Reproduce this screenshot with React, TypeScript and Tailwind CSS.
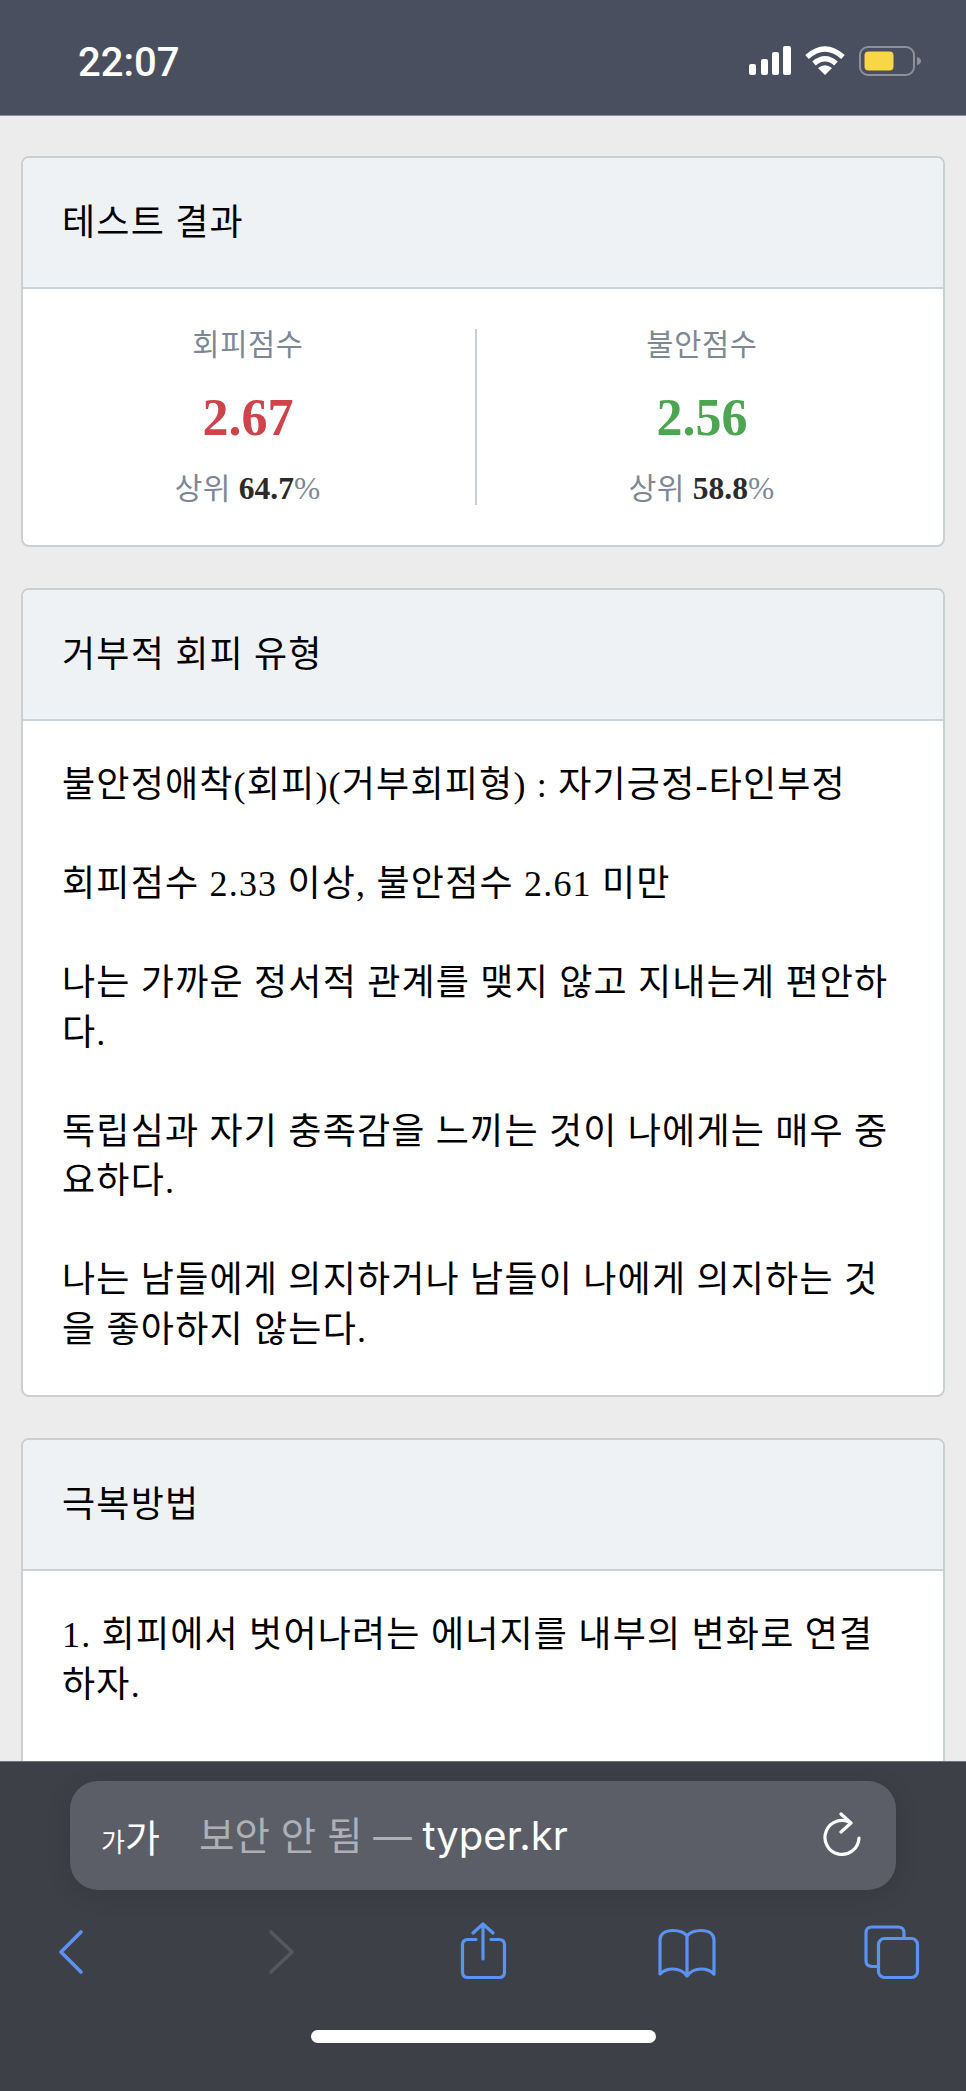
const ff = "font-['Liberation_Serif','Noto_Sans_CJK_KR',serif]";

function Card({ title, children }: { title: string; children: React.ReactNode }) {
  return (
    <div className="mb-[41px] rounded-[8px] border-2 border-[#c9d0d4] bg-white overflow-hidden">
      <div className="h-[131px] flex items-center pl-[39px] pr-[40px] bg-[#eef2f5] border-b-2 border-[#ccd3d8] text-[36px] tracking-[1.2px] leading-[50px] text-black">
        {title}
      </div>
      {children}
    </div>
  );
}

function Score({ label, score, color, pct, w, divider }: { label: string; score: string; color: string; pct: string; w: string; divider?: boolean }) {
  return (
    <div className={`${w} ${divider ? "border-r-2 border-[#c9d0d4]" : ""} h-[176px] flex flex-col items-center text-[#7d8896]`}>
      <div className="text-[29.5px] tracking-[0.7px] leading-[36px] mt-[-2px] pr-[2px]">{label}</div>
      <div className={`${color} text-[52px] leading-[60px] font-bold mt-[25px] pr-[2px]`}>{score}</div>
      <div className="text-[31.5px] leading-[36px] mt-[23px] pr-[3px]">
        <span className="text-[30px] tracking-[0.5px]">상위</span> <b className="font-bold text-[#2b2b2b]">{pct}</b>%
      </div>
    </div>
  );
}

function Toolbar() {
  const blue = "#5b93f2";
  return (
    <div className="mt-[32px] flex items-start justify-between pl-[41px] pr-[45px]">
      <svg width="60" height="60" viewBox="0 0 60 60" fill="none" stroke={blue} strokeWidth="3.6" strokeLinecap="round" strokeLinejoin="round">
        <path d="M40 10 L20 30 L40 50" />
      </svg>
      <svg width="60" height="60" viewBox="0 0 60 60" fill="none" stroke="#55585f" strokeWidth="3.6" strokeLinecap="round" strokeLinejoin="round">
        <path d="M25 10 L46 30 L25 50" />
      </svg>
      <svg width="60" height="60" viewBox="0 0 60 60" fill="none" stroke={blue} strokeWidth="3.2" strokeLinecap="round" strokeLinejoin="round">
        <path d="M25 17.5 H17 Q11.5 17.5 11.5 23 V50 Q11.5 55.5 17 55.5 H48 Q53.5 55.5 53.5 50 V23 Q53.5 17.5 48 17.5 H40" />
        <path d="M32 37 V2 M22 11 L32 2 L42 11" />
      </svg>
      <svg width="60" height="60" viewBox="0 0 60 60" fill="none" stroke={blue} strokeWidth="3.2" strokeLinecap="round" strokeLinejoin="round">
        <path d="M31 14 C28 10 23 8.5 17 8.5 C9 8.5 4 12 4 18 V52 C8 48 12 47 17 47 C23 47 28 50 31 54 C34 50 39 47 45 47 C50 47 54 48 58 52 V18 C58 12 53 8.5 45 8.5 C39 8.5 34 10 31 14 Z M31 14 V54" />
      </svg>
      <svg width="60" height="60" viewBox="0 0 60 60" fill="none" stroke={blue} strokeWidth="3.2" strokeLinecap="round" strokeLinejoin="round">
        <path d="M16 44.5 H11 Q5 44.5 5 38.5 V11 Q5 5 11 5 H37 Q43 5 43 11 V16" />
        <rect x="17.5" y="16.5" width="39" height="39" rx="6" />
      </svg>
    </div>
  );
}

export default function App() {
  return (
    <div className={`${ff} w-[966px] h-[2091px] flex flex-col overflow-hidden bg-[#ececec]`}>
      {/* status bar */}
      <div className="h-[116px] shrink-0 bg-[#4a4f5f] border-b border-[#8d919c] flex items-start justify-between pl-[78px] pr-[45px] pt-[38px]">
        <span className="font-['Roboto',sans-serif] text-[40px] leading-[46px] font-medium text-white mt-[2px]">22:07</span>
        <div className="flex items-start gap-[14px] pt-[8px]">
          <svg width="42" height="29" viewBox="0 0 42 29" fill="#fff">
            <rect x="0" y="18" width="7" height="11" rx="2" />
            <rect x="12" y="13" width="7" height="16" rx="2" />
            <rect x="23" y="6" width="7" height="23" rx="2" />
            <rect x="34" y="0" width="8" height="29" rx="2" />
          </svg>
          <svg width="40" height="29" viewBox="0 0 40 29" fill="none" stroke="#fff" strokeWidth="5.4">
            <path d="M2 11 Q20 -5 38 11" />
            <path d="M9 17.5 Q20 8 31 17.5" />
            <path d="M20 29 L13 22 Q20 16.5 27 22 Z" fill="#fff" stroke="none" />
          </svg>
          <svg width="62" height="30" viewBox="0 0 62 30" fill="none">
            <rect x="1" y="1" width="54" height="28" rx="8" stroke="#8d919c" strokeWidth="2" />
            <rect x="5.5" y="5.5" width="29" height="19" rx="4" fill="#f8d645" />
            <path d="M58 11 Q62 12 62 15 Q62 18 58 19 Z" fill="#8d919c" />
          </svg>
        </div>
      </div>

      {/* page */}
      <div className="flex-1 min-h-0 overflow-hidden px-[21px] pt-[40px]">
        <Card title="테스트 결과">
          <div className="flex py-[40px]">
            <Score label="회피점수" score="2.67" color="text-[#cf434a]" pct="64.7" w="w-[454px]" divider />
            <Score label="불안점수" score="2.56" color="text-[#4ba64f]" pct="58.8" w="w-[452px]" />
          </div>
        </Card>
        <Card title="거부적 회피 유형">
          <div className="pt-[40px] pb-[40px] pl-[39px] pr-[40px] text-[36px] tracking-[1.2px] leading-[49.5px] text-black whitespace-nowrap">
            불안정애착(회피)(거부회피형) : 자기긍정-타인부정
            <br /><br />
            회피점수 2.33 이상, 불안점수 2.61 미만
            <br /><br />
            나는 가까운 정서적 관계를 맺지 않고 지내는게 편안하
            <br />다.
            <br /><br />
            독립심과 자기 충족감을 느끼는 것이 나에게는 매우 중
            <br />요하다.
            <br /><br />
            나는 남들에게 의지하거나 남들이 나에게 의지하는 것
            <br />을 좋아하지 않는다.
          </div>
        </Card>
        <Card title="극복방법">
          <div className="pt-[40px] pl-[39px] pr-[40px] pb-[200px] text-[36px] tracking-[1.2px] leading-[49.5px] text-black whitespace-nowrap">
            1. 회피에서 벗어나려는 에너지를 내부의 변화로 연결
            <br />하자.
          </div>
        </Card>
      </div>

      {/* safari chrome */}
      <div className="h-[330px] shrink-0 bg-[#3e4048] border-t border-[#6f727a] pt-[19px] font-['Noto_Sans_CJK_KR',sans-serif]">
        <div className="mx-[70px] h-[109px] rounded-[28px] bg-[#5b5e67] shadow-[0_4px_24px_rgba(0,0,0,0.12)] flex items-center pl-[31px] pr-[30px]">
          <span className="text-white text-[38px] leading-none w-[98px] whitespace-nowrap">
            <span className="text-[26px]">가</span>가
          </span>
          <span className="text-[#aeb0b6] text-[38.5px] leading-none font-['Inter','Noto_Sans_CJK_KR',sans-serif] whitespace-nowrap">보안 안 됨 — <span className="text-white text-[40px]">typer.kr</span></span>
          <svg className="ml-auto" width="44" height="50" viewBox="0 0 44 50" fill="none" stroke="#fff" strokeWidth="3.2" strokeLinecap="round" strokeLinejoin="round">
            <path d="M37 27 A17 17 0 1 1 29 12 M19 3 L29 12 L19 21" />
          </svg>
        </div>
        <Toolbar />
        <div className="mx-auto mt-[48px] w-[345px] h-[13px] rounded-full bg-white" />
      </div>
    </div>
  );
}
